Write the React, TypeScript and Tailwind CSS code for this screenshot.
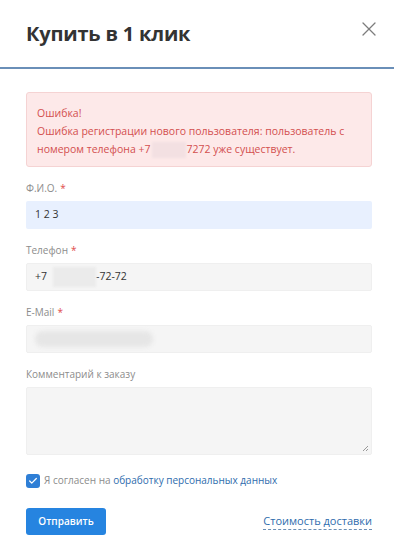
import { Check, X } from "lucide-react";

function Label({ text, required }: { text: string; required?: boolean }) {
  return (
    <div className="mb-[5px] h-[15px] text-[10px] leading-[15px] text-[#8c8c8c]">
      {text}
      {required && <span className="ml-[3px] text-[#e04b4b]">*</span>}
    </div>
  );
}

export default function App() {
  return (
    <div
      className="h-[558px] w-[394px] bg-white text-[#333]"
      style={{ fontFamily: '"Open Sans", "Noto Sans", sans-serif' }}
    >
      <div className="flex h-[67px] items-center justify-between pl-[26px] pr-[13px]">
        <h1 className="text-[20px] font-bold leading-none tracking-[-0.2px] text-[#333]">
          Купить в 1 клик
        </h1>
        <button className="mt-[-9px] text-[#7d7d7d]">
          <X size={24} strokeWidth={1.3} />
        </button>
      </div>
      <div className="h-[2px] bg-[#6a8fb8]" />

      <div className="pl-[26px] pr-[22px]">
        <div className="mt-[23px] h-[75px] rounded-[3px] border border-[#f5d3d3] bg-[#fde9e9] px-[10px] pt-[11px] text-[10.5px] leading-[18px] text-[#d34f4f]">
          <div>Ошибка!</div>
          <div>Ошибка регистрации нового пользователя: пользователь с</div>
          <div>
            номером телефона +7
            <span className="mx-[1px] inline-block h-[16px] w-[34px] bg-[#f3e0e2] align-middle blur-[1px]" />
            7272 уже существует.
          </div>
        </div>

        <div className="mt-[14px]">
          <Label text="Ф.И.О." required />
          <div className="flex h-[28px] items-center rounded-[2px] bg-[#e8f0fe] px-[9px] text-[10.5px] text-[#333]">
            1 2 3
          </div>
        </div>

        <div className="mt-[14px]">
          <Label text="Телефон" required />
          <div className="flex h-[28px] items-center rounded-[2px] border border-[#efefef] bg-[#f5f5f5] px-[8px] text-[10.5px] text-[#333]">
            +7
            <span className="ml-[6px] inline-block h-[20px] w-[43px] bg-[#ebebeb] blur-[1px]" />
            -72-72
          </div>
        </div>

        <div className="mt-[14px]">
          <Label text="E-Mail" required />
          <div className="flex h-[28px] items-center rounded-[2px] border border-[#efefef] bg-[#f5f5f5] px-[8px]">
            <span className="inline-block h-[16px] w-[118px] rounded-full bg-[#e6e6e6] blur-[2px]" />
          </div>
        </div>

        <div className="mt-[14px]">
          <Label text="Комментарий к заказу" />
          <div className="relative h-[68px] rounded-[2px] border border-[#efefef] bg-[#f5f5f5]">
            <svg
              className="absolute bottom-[2px] right-[2px]"
              width="8"
              height="8"
              viewBox="0 0 8 8"
            >
              <path d="M7 2 L2 7 M7 5 L5 7" stroke="#999" strokeWidth="1" />
            </svg>
          </div>
        </div>

        <div className="mt-[18px] flex items-center gap-[4px]">
          <div className="flex h-[14px] w-[14px] items-center justify-center rounded-[3px] bg-[#2f7fd6]">
            <Check size={10} strokeWidth={3} className="text-white" />
          </div>
          <span className="text-[10px] text-[#8c8c8c]">
            Я согласен на{" "}
            <span className="text-[#2e6cad]">обработку персональных данных</span>
          </span>
        </div>

        <div className="mt-[20px] flex items-center justify-between">
          <button className="h-[27px] w-[80px] rounded-[3px] bg-[#2684e0] text-[10px] font-semibold text-white">
            Отправить
          </button>
          <span className="border-b border-dashed border-[#6b8fb5] text-[11px] leading-[16px] text-[#2e6cad]">
            Стоимость доставки
          </span>
        </div>
      </div>
    </div>
  );
}
